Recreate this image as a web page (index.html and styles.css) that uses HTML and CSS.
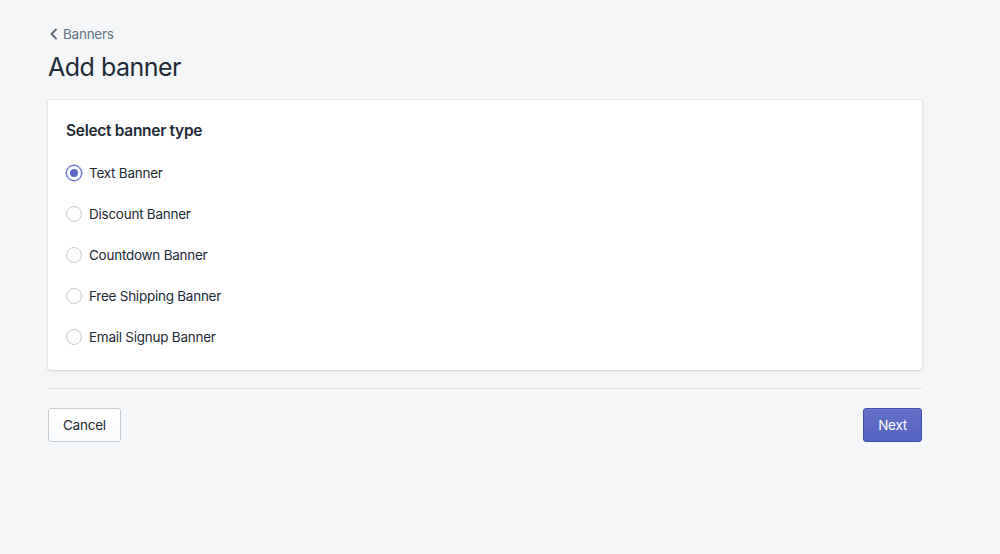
FILE: index.html
```html
<!DOCTYPE html>
<html lang="en">
<head>
    <meta charset="UTF-8">
    <meta name="viewport" content="width=device-width, initial-scale=1.0">
    <title>Add banner</title>
    <link rel="stylesheet" href="styles.css">
</head>
<body>
    <div class="page">
        <a class="breadcrumb" href="#">
            <svg width="10" height="12" viewBox="0 0 10 12"><path d="M7 1.5 2.5 6 7 10.5" fill="none" stroke="#5c6b7a" stroke-width="1.8" stroke-linecap="round" stroke-linejoin="round"/></svg>
            <span>Banners</span>
        </a>
        <h1 class="title">Add banner</h1>

        <div class="card">
            <h2 class="card-title">Select banner type</h2>
            <ul class="choices">
                <li><label class="choice"><input type="radio" name="type" checked><span class="radio"></span>Text Banner</label></li>
                <li><label class="choice"><input type="radio" name="type"><span class="radio"></span>Discount Banner</label></li>
                <li><label class="choice"><input type="radio" name="type"><span class="radio"></span>Countdown Banner</label></li>
                <li><label class="choice"><input type="radio" name="type"><span class="radio"></span>Free Shipping Banner</label></li>
                <li><label class="choice"><input type="radio" name="type"><span class="radio"></span>Email Signup Banner</label></li>
            </ul>
        </div>

        <div class="actions">
            <button class="btn">Cancel</button>
            <button class="btn btn-primary">Next</button>
        </div>
    </div>
</body>
</html>
```

FILE: styles.css
```css
body {
    margin: 0;
    background-color: #f4f6f8;
    font-family: Inter, "Noto Sans", sans-serif;
    color: #212b36;
}
.page {
    width: 874px;
    padding: 26px 0 0 48px;
}
.breadcrumb {
    display: flex;
    align-items: center;
    gap: 4px;
    margin-left: 1px;
    color: #637381;
    text-decoration: none;
    font-size: 13.5px;
    letter-spacing: -0.25px;
    line-height: 16px;
}
.title {
    margin: 8px 0 0;
    font-size: 25px;
    font-weight: 400;
    line-height: 34px;
    letter-spacing: -0.5px;
}
.card {
    margin-top: 16px;
    background-color: #fff;
    border-radius: 3px;
    box-shadow: 0 0 0 1px rgba(63, 63, 68, 0.05), 0 1px 3px 0 rgba(63, 63, 68, 0.15);
    padding: 20px 19px 13px 18px;
}
.card-title {
    margin: 0;
    font-size: 15.5px;
    font-weight: 600;
    line-height: 22px;
    letter-spacing: -0.3px;
}
.choices {
    list-style: none;
    margin: 10px 0 0;
    padding: 0;
}
.choice {
    display: flex;
    align-items: center;
    height: 41px;
    font-size: 13.5px;
    letter-spacing: -0.25px;
    cursor: pointer;
}
.choice input {
    display: none;
}
.radio {
    width: 14px;
    height: 14px;
    border: 1px solid #c4cdd5;
    border-radius: 50%;
    margin-right: 7px;
    box-sizing: content-box;
    display: flex;
    align-items: center;
    justify-content: center;
    background: linear-gradient(180deg, #fff, #f9fafb);
}
.choice input:checked + .radio {
    border-color: #5c6ac4;
    box-shadow: 0 0 0 0.5px #5c6ac4;
}
.choice input:checked + .radio::after {
    content: "";
    width: 8px;
    height: 8px;
    border-radius: 50%;
    background-color: #5c6ac4;
}
.actions {
    display: flex;
    justify-content: space-between;
    margin-top: 18px;
    padding-top: 19px;
    border-top: 1px solid #dfe3e8;
}
.btn {
    font-family: inherit;
    font-size: 13.5px;
    letter-spacing: -0.25px;
    height: 34px;
    padding: 0 14px;
    border: 1px solid #c4cdd5;
    border-radius: 3px;
    background: linear-gradient(180deg, #fff, #f9fafb);
    color: #212b36;
    box-shadow: 0 1px 0 0 rgba(22, 29, 37, 0.05);
    cursor: pointer;
}
.btn-primary {
    background: linear-gradient(180deg, #6371c7, #5563c1);
    border-color: #3f4eae;
    color: #fff;
    box-shadow: inset 0 1px 0 0 #6f7bcb, 0 1px 0 0 rgba(22, 29, 37, 0.05);
}
```
